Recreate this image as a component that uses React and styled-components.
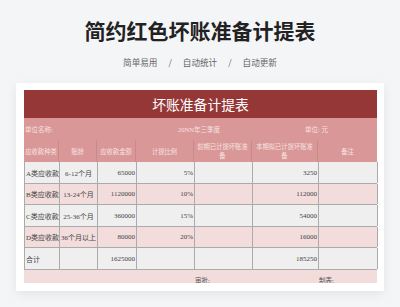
import React from "react";
import styled, { createGlobalStyle } from "styled-components";

const Global = createGlobalStyle`
  html, body { margin: 0; padding: 0; background: #f4f5f7; }
  * { box-sizing: border-box; }
`;

const COLS = "35px 38px 39px 58px 58px 66px 59px";
const SERIF = `"Liberation Serif", "Noto Sans CJK SC", serif`;

const Page = styled.div`
  width: 400px;
  height: 307px;
  overflow: hidden;
  display: flex;
  flex-direction: column;
  align-items: center;
  font-family: "Noto Sans CJK SC", sans-serif;
`;

const Title = styled.h1`
  margin: 15px 0 0;
  font-size: 21px;
  line-height: 30px;
  font-weight: 700;
  color: #222;
  letter-spacing: 0;
`;

const Sub = styled.div`
  margin-top: 10px;
  display: flex;
  gap: 11px;
  font-size: 8.6px;
  line-height: 14px;
  color: #666;
`;

const Card = styled.div`
  margin-top: 14px;
  align-self: stretch;
  margin-left: 16px;
  margin-right: 16px;
  background: #fff;
  padding: 7px 7px 8px 8px;
  box-shadow: 0 3px 10px rgba(0, 0, 0, 0.07);
`;

const Table = styled.div`
  width: 353px;
  font-family: ${SERIF};
`;

const TitleBar = styled.div`
  height: 28px;
  background: #953737;
  color: #fff;
  font-size: 13.8px;
  display: flex;
  align-items: center;
  justify-content: center;
`;

const Row = styled.div`
  display: grid;
  grid-template-columns: ${COLS};
  height: ${(p) => p.$h}px;
  background: ${(p) => p.$bg};
  border-left: ${(p) => (p.$lined ? "1px solid #ababab" : "none")};
  border-bottom: ${(p) => (p.$lined ? "1px solid #ababab" : "none")};
`;

const InfoCell = styled.div`
  grid-column: ${(p) => p.$span};
  display: flex;
  align-items: center;
  justify-content: ${(p) => p.$justify || "flex-start"};
  padding-left: ${(p) => p.$pl || 0}px;
  font-size: 6.5px;
  color: #f6e2e2;
`;

const HeadCell = styled.div`
  display: flex;
  align-items: center;
  justify-content: center;
  text-align: center;
  padding: ${(p) => (p.$wrap ? "0 3px" : "0")};
  font-size: 6.3px;
  line-height: 9px;
  color: #f6e2e2;
  white-space: ${(p) => (p.$wrap ? "normal" : "nowrap")};
  border-right: ${(p) => (p.$last ? "none" : "1px solid #c88a8a")};
`;

const Cell = styled.div`
  display: flex;
  align-items: center;
  justify-content: ${(p) =>
    p.$align === "right" ? "flex-end" : p.$align === "center" ? "center" : "flex-start"};
  padding: 0 1px;
  font-size: 7px;
  color: #444;
  white-space: nowrap;
  overflow: hidden;
  border-right: 1px solid #ababab;
`;

const Footer = styled.div`
  display: grid;
  grid-template-columns: ${COLS};
  height: 13px;
  background: #f2dcdc;
  overflow: hidden;
`;

const FootText = styled.div`
  grid-column: ${(p) => p.$col};
  padding-top: 7px;
  padding-left: 1px;
  font-size: 6.5px;
  line-height: 8px;
  color: #555;
`;

const heads = [
  "应收款种类",
  "账龄",
  "应收款金额",
  "计提比例",
  "前期已计提坏账准备",
  "本期拟已计提坏账准备",
  "备注",
];

const rows = [
  ["A类应收款", "6-12个月", "65000", "5%", "", "3250", ""],
  ["B类应收款", "13-24个月", "1120000", "10%", "", "112000", ""],
  ["C类应收款", "25-36个月", "360000", "15%", "", "54000", ""],
  ["D类应收款", "36个月以上", "80000", "20%", "", "16000", ""],
  ["合计", "", "1625000", "", "", "185250", ""],
];

const aligns = ["left", "center", "right", "right", "right", "right", "right"];

export default function App() {
  return (
    <Page>
      <Global />
      <Title>简约红色坏账准备计提表</Title>
      <Sub>
        <span>简单易用</span>
        <span>/</span>
        <span>自动统计</span>
        <span>/</span>
        <span>自动更新</span>
      </Sub>
      <Card>
        <Table>
          <TitleBar>坏账准备计提表</TitleBar>
          <Row $h={22} $bg="#d99797">
            <InfoCell $span="1 / 4" $pl={1}>单位名称:</InfoCell>
            <InfoCell $span="4 / 6" $justify="center" $pl={10}>20NN年三季度</InfoCell>
            <InfoCell $span="6 / 8" $pl={53}>单位: 元</InfoCell>
          </Row>
          <Row $h={22} $bg="#d99797">
            {heads.map((h, i) => (
              <HeadCell key={h} $wrap={h.length > 6} $last={i === heads.length - 1}>
                {h}
              </HeadCell>
            ))}
          </Row>
          {rows.map((r, ri) => (
            <Row
              key={ri}
              $lined
              $h={ri % 2 === 0 ? 22 : 21}
              $bg={ri % 2 === 0 ? "#efefef" : "#f2dcdc"}
            >
              {r.map((c, ci) => (
                <Cell key={ci} $align={aligns[ci]}>
                  {c}
                </Cell>
              ))}
            </Row>
          ))}
          <Footer>
            <FootText $col="5">审批:</FootText>
            <FootText $col="7">制表:</FootText>
          </Footer>
        </Table>
      </Card>
    </Page>
  );
}
